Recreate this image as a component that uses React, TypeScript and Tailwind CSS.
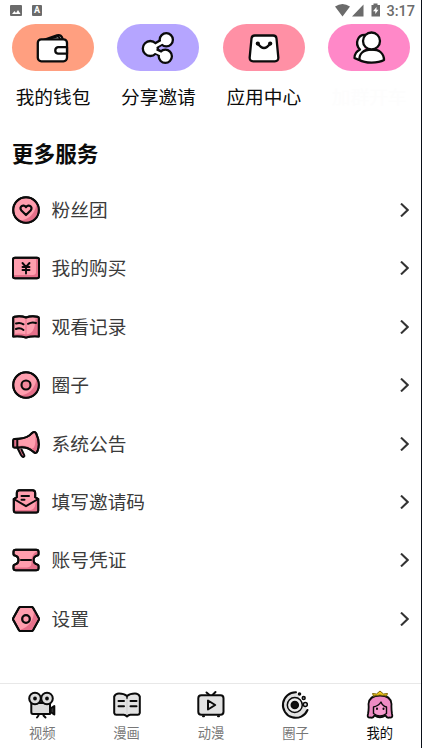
import React from "react";

const font = "font-['Roboto','Noto_Sans_CJK_SC',sans-serif]";
const P = "#ff9eae";
const D = "#e5708a";

function Svg({ w, h, children, sw = 2 }: { w: number; h: number; children: React.ReactNode; sw?: number }) {
  return (
    <svg width={w} height={h} viewBox={`0 0 ${w} ${h}`} fill="none" stroke="#0b0b0b" strokeWidth={sw} strokeLinecap="round" strokeLinejoin="round" className="block shrink-0">
      {children}
    </svg>
  );
}

const Wallet = () => (
  <Svg w={36} h={36} sw={2.3}>
    <path d="M7 10.500 22 5.300Q26.500 4 27.800 9.500" fill="#fff" />
    <rect x="2.800" y="9.300" width="29.200" height="22" rx="3.500" fill="#fff" />
    <path d="M14 9 23.500 6.500 25 9" strokeWidth="1.800" />
    <path d="M32 17.200H23a3.300 3.300 0 0 0 0 6.500h9z" fill="#fff" />
  </Svg>
);
const Share = () => (
  <Svg w={36} h={36} sw={2.3}>
    <path d="M11 18.500 26 9.500M11 18.500 25 26" strokeWidth="7" />
    <circle cx="10.300" cy="18.500" r="7.500" fill="#fff" />
    <circle cx="26.300" cy="9.800" r="6.600" fill="#fff" />
    <circle cx="25.300" cy="26.300" r="6.600" fill="#fff" />
    <path d="M12 18 26 10M12 20 25 26" stroke="#fff" strokeWidth="2.600" />
  </Svg>
);
const Bag = () => (
  <Svg w={36} h={36} sw={2.3}>
    <path d="M8.800 5.500h18.400q3 0 3.300 3l1.800 18.800q.3 4-3.500 4h-21.600q-3.800 0-3.500-4L5.500 8.500q.3-3 3.300-3Z" fill="#fff" />
    <path d="M11.800 13.500Q18 22.500 24.200 13.500" />
    <circle cx="11.800" cy="13.600" r="1" /><circle cx="24.200" cy="13.600" r="1" />
  </Svg>
);
const People = () => (
  <Svg w={36} h={36} sw={2.3}>
    <path d="M15 5c-8-1-12 8.500-6 14.500-4 2-5.500 5.500-5.500 8.500q4 2.500 9 2.500" fill="#fff" />
    <path d="M8.500 30C8 24 12 19.500 20.500 19.500S33 24 33 30C27 33.500 14 33.500 8.500 30Z" fill="#fff" />
    <circle cx="20.500" cy="11" r="8.500" fill="#fff" />
  </Svg>
);

const Fans = () => (
  <Svg w={28} h={28}><circle cx="14" cy="14" r="12.800" fill={P} /><path d="M24.500 8a12 12 0 0 1-17 16.500Q22 23 24.500 8Z" fill={D} stroke="none" /><circle cx="14" cy="14" r="12.800" /><path d="m14 19-4.600-4.500c-3-3.500 2-7 4.600-3.300 2.600-3.700 7.600-.2 4.600 3.300Z" strokeWidth="2.200" /></Svg>
);
const Purchase = () => (
  <Svg w={28} h={28}><rect x="1" y="3.700" width="26" height="20.500" rx="2" fill={P} /><path d="M2 21h19q3 0 3-3V5h2v18.500H2Z" fill={D} stroke="none" /><rect x="1" y="3.700" width="26" height="20.500" rx="2" /><path d="m10.500 9 3.500 4 3.500-4M14 13v6.500M10.500 13h7M10.500 16h7" strokeWidth="1.900" /></Svg>
);
const book = "M1.200 5Q1.200 4 2.500 3.700 9 2.600 14 4.500q5-1.900 11.500-.8Q26.800 4 26.800 5v18.500Q20 22.800 14 24.500 8 22.800 1.200 23.500Z";
const History = () => (
  <Svg w={28} h={28}><path d={book} fill={P} /><path d="M2 21q6-1 12 .5 9 0 9.500-16H26v17.500q-6-.5-12 1-6-1.500-12-1Z" fill={D} stroke="none" /><path d="M14 5v18.500" stroke={D} strokeWidth="1" /><path d={book} /><path d="M4 10.500q4-1.500 7.500.8M4 16q4-1.800 7.500 1M16 10.800q4-2.300 8-.8" /></Svg>
);
const Circle = () => (
  <Svg w={28} h={28}><circle cx="14" cy="14" r="12.800" fill={P} /><path d="M24.500 8a12 12 0 0 1-17 16.500Q22 23 24.500 8Z" fill={D} stroke="none" /><circle cx="14" cy="14" r="12.800" /><circle cx="14" cy="14" r="4.500" fill="#f2889c" strokeWidth="2.100" /></Svg>
);
const horn = "M2.500 9 7 8.700Q16 8 19.500 3.500 22.500.5 24.200 3.500 28.500 13 25.500 21 24 24.500 21 21.500 15 16.500 7.500 17.500L2.500 17.500Q1.200 17.500 1.200 16V10.500Q1.200 9 2.500 9Z";
const Horn = () => (
  <Svg w={28} h={28}>
    <path d="m5.500 18 3.500 7q2 3 3.200 1.500.6-1-1-3.500L9.500 19.500" fill={D} />
    <path d={horn} fill={P} />
    <path d="M6 16q7-2 14 2.500 4 0 3.500-14l2 6q.5 10-2 11-6-6-17.500-5Z" fill={D} stroke="none" />
    <path d="M2 10h3v7H2Z" fill={D} stroke="none" />
    <path d="M5.300 9.500V17" /><path d={horn} />
  </Svg>
);
const mail = "m1.800 11 3-1.800V5q0-2.800 2.700-2.800h13Q23.200 2.200 23.200 5v4.200l3 1.800V22.500q0 2-2 2H3.800q-2 0-2-2Z";
const Mail = () => (
  <Svg w={28} h={28}><path d={mail} fill={P} /><path d="M2.800 22H19q5-1 5-11l1.500 1v11.500H2.800Z" fill={D} stroke="none" /><path d={mail} /><path d="M1.800 11 14 18.200 26.200 11M9.500 8h7.500M9.500 11.800h3" /></Svg>
);
const ticket = "M3.800 3.700h20.400q2.300 0 2.300 2v2.500q0 1.200-1.300 1.300a4.600 4.600 0 0 0 0 9q1.300.1 1.300 1.300v2.500q0 2-2.300 2H3.800q-2.300 0-2.300-2v-2.500q0-1.200 1.300-1.300a4.600 4.600 0 0 0 0-9q-1.300-.1-1.300-1.300V5.700q0-2 2.300-2Z";
const Ticket = () => (
  <Svg w={28} h={28}><path d={ticket} fill={P} /><path d="M2.500 21.500H15q5 0 4.500-7 0-6 5-9h1v3q-4 1-4.500 5.500t4.500 6v3.500h-23Z" fill={D} stroke="none" /><path d={ticket} /><path d="M9 14h10" strokeWidth="2.100" /></Svg>
);
const hex = "M8.500 2h11q1 0 1.500.8l5.700 10.200q.5 1 0 2L21 25.200q-.5.800-1.500.8h-11q-1 0-1.500-.8L1.300 15q-.5-1 0-2L7 2.800Q7.500 2 8.500 2Z";
const Settings = () => (
  <Svg w={28} h={28}><path d={hex} fill={P} /><path d="m22 5 4 9-6 11H8Q22 20 22 5Z" fill={D} stroke="none" /><path d={hex} /><circle cx="14" cy="14" r="3.800" fill={P} strokeWidth="2.300" /></Svg>
);

const Camera = () => (
  <Svg w={30} h={30}><path d="m11.500 25.500-1.500 2M16.500 25.500l2 2M23.500 18.500l3.800-2.500v8.500L23.500 22Z" fill="#333" /><path d="M4.300 13H23v11H6q-1.700 0-1.700-2Z" fill="#ddd" /><circle cx="8" cy="8.500" r="5.800" fill="#ddd" /><circle cx="20" cy="8.500" r="5.800" fill="#ddd" /><circle cx="8" cy="8.500" r=".9" fill="#111" /><circle cx="20" cy="8.500" r=".9" fill="#111" /></Svg>
);
const Book = () => (
  <Svg w={30} h={30}><path d="M2.200 6.500Q3.500 3.500 7 3.500q5 0 8 2.500Q18 3.500 23 3.500q3.500 0 4.800 3v16.500q-.5 1.800-2 1.800h-7.500Q16.500 25 15 26.500 13.500 25 11.700 24.800H4.200q-1.500 0-2-1.800Z" fill="#e2e2e2" /><path d="M15 6.500v2" strokeWidth="1.500" /><path d="M15 9v15" stroke="#cfcfcf" strokeWidth="1" /><path d="M6.500 11H12M6.500 16.300H12M18.500 11H24.500M18.500 16.300H24.500" /></Svg>
);
const Tv = () => (
  <Svg w={30} h={30}><path d="m16.500 5 3-3M13.500 5l-3-2.500" /><rect x="2.300" y="5.300" width="25.200" height="19.500" rx="3" fill="#e2e2e2" /><path d="M7 26.200h1m14 0h1" /><path d="M12 10.500v9L19.200 15Z" /></Svg>
);
const Orbit = () => (
  <Svg w={30} h={30}><path d="M16 2.200A12.800 12.800 0 1 0 27.500 20" fill="#e2e2e2" /><circle cx="14.800" cy="15" r="7.500" strokeWidth="1.500" fill="#eee" /><circle cx="14.800" cy="15" r="3.300" fill="#111" /><circle cx="19.500" cy="4" r=".8" fill="#111" /><circle cx="23.700" cy="8" r="1.400" strokeWidth="1.600" /><circle cx="25.300" cy="14.500" r="2" strokeWidth="1.500" fill="#ddd" /></Svg>
);
const Princess = () => (
  <Svg w={30} h={30} sw={1.8}><path d="M5.500 27.500Q1.800 28 3 24 4 19 3.500 14C4 8 8.500 5.500 15 5.500S26 8 26.500 14Q26.200 19 27 24 28.200 28 24.500 27.500 22 28.500 20.500 25.500 15 29 9.500 25.500 8 28.500 5.500 27.500Z" fill="#ee8cc4" /><path d="M8.500 23.500V17q5-1 7.500-5 1.500 4 5.500 5v6.500q-6.500 5-13 0Z" fill="#f79bcf" strokeWidth="1.400" /><path d="m8.500 6-1-2.500 4 .5L15 1l3.500 3 4-.5-1 2.500q-6.500-2-13 0Z" fill="#efc51b" stroke="#7d650c" strokeWidth="1" /><path d="M12 18.500v.5M18.500 18.500v.5" strokeWidth="2" /></Svg>
);

const services: [string, React.FC][] = [
  ["粉丝团", Fans], ["我的购买", Purchase], ["观看记录", History], ["圈子", Circle],
  ["系统公告", Horn], ["填写邀请码", Mail], ["账号凭证", Ticket], ["设置", Settings],
];
const shortcuts: [string, string, React.FC][] = [
  ["我的钱包", "bg-[#ff9f80]", Wallet], ["分享邀请", "bg-[#b5a5ff]", Share],
  ["应用中心", "bg-[#ff90a5]", Bag], ["加群开车", "bg-[#ff88c8]", People],
];
const tabs: [string, React.FC][] = [["视频", Camera], ["漫画", Book], ["动漫", Tv], ["圈子", Orbit], ["我的", Princess]];

export default function App() {
  return (
    <div className={`flex h-[748px] w-[422px] flex-col overflow-hidden border-r border-[#0a0f18] bg-white ${font}`}>
      <header className="flex h-6 shrink-0 items-start justify-between pr-[6px] pl-[10px] text-[#6b6b6b]">
        <div className="flex gap-[10px] pt-[5px]">
          <svg width="12" height="12" viewBox="0 0 12 12" fill="currentColor"><rect width="12" height="11" rx="1" /><path d="m2 9 2.500-3 1.500 2 2-3 2.500 4Z" fill="#fff" /></svg>
          <div className="flex h-[11px] w-[10px] items-center justify-center rounded-[1px] bg-[#6b6b6b] text-[9px] font-bold text-white">A</div>
        </div>
        <div className="flex items-start">
          <svg width="46" height="16" viewBox="0 0 46 16" fill="currentColor" className="mt-[3px]">
            <path d="M0 3.500q7.500-5 15 0L7.500 13.500ZM28.500 1.500v12H17Z" /><path d="M38.500.5h4V2H45v11.500h-8.500V2h2Z" /><path d="m41.500 4-3.500 4.200h2.300V11l3.200-4.200h-2Z" fill="#fff" />
          </svg>
          <span className="ml-[5px] pt-[4px] text-[14.500px] leading-4 font-medium">3:17</span>
        </div>
      </header>

      <section className="flex shrink-0 gap-[23.400px] pl-3">
        {shortcuts.map(([label, color, Icon], i) => (
          <div key={label} className="flex w-[82px] shrink-0 flex-col items-center">
            <div className={`flex h-[47px] w-full items-center justify-center rounded-full ${color}`}><Icon /></div>
            <span className={`mt-[13px] text-[18.700px] leading-7 whitespace-nowrap ${i === 3 ? "text-[#fdfdfd]" : "text-[#0b0b0b]"}`}>{label}</span>
          </div>
        ))}
      </section>

      <h1 className="mt-[27px] ml-3 shrink-0 text-[21.600px] leading-8 font-bold text-[#0b0b0b]">更多服务</h1>

      <main className="mt-[9.900px] flex flex-1 flex-col">
        {services.map(([label, Icon]) => (
          <div key={label} className="flex h-[58.400px] shrink-0 items-center pr-3 pl-3">
            <Icon />
            <span className="ml-[11.600px] flex-1 pt-[2px] text-[18.700px] leading-7 text-[#3b3b3b]">{label}</span>
            <svg width="9" height="14" viewBox="0 0 9 14" fill="none" stroke="#333" strokeWidth="2.100"><path d="m1 .6 6.700 6.400L1 13.400" /></svg>
          </div>
        ))}
      </main>

      <nav className="-mr-px flex h-[65px] shrink-0 border-t border-[#e8e8e8]">
        {tabs.map(([label, Icon], i) => (
          <div key={label} className="flex flex-1 flex-col items-center pt-[6px]">
            <Icon />
            <span className={`mt-[4px] text-[13.300px] leading-5 ${i === 4 ? "text-[#0b0b0b]" : "text-[#777]"}`}>{label}</span>
          </div>
        ))}
      </nav>
    </div>
  );
}
